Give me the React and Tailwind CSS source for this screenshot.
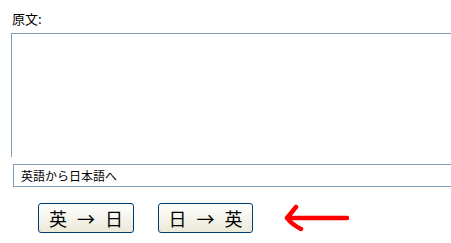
const font = { fontFamily: '"Noto Sans CJK JP", "Liberation Sans", sans-serif' };

const App = () => {
  return (
    <div className="w-[451px] h-[243px] bg-white overflow-hidden text-black" style={font}>
      <div className="pl-[12px] pt-[11px] text-[13px] leading-[16px]">原文:</div>
      <div className="ml-[11px] mt-[6px] h-[124px] border-t border-l border-[#7f9db9] bg-white" />
      <div className="ml-[13px] mt-[7px] h-[23px] border border-r-0 border-[#7f9db9] pl-[7px] flex items-center text-[12px]">
        英語から日本語へ
      </div>
      <div className="flex items-center mt-[16px] ml-[38px]">
        <button className="w-[96px] h-[30px] rounded-[3px] border border-[#003c74] bg-gradient-to-b from-white to-[#ece9d8] text-[18px] leading-none flex items-center justify-center gap-[10px]">
          <span>英</span>
          <span>→</span>
          <span>日</span>
        </button>
        <button className="ml-[24px] w-[95px] h-[30px] rounded-[3px] border border-[#003c74] bg-gradient-to-b from-white to-[#ece9d8] text-[18px] leading-none flex items-center justify-center gap-[10px]">
          <span>日</span>
          <span>→</span>
          <span>英</span>
        </button>
        <svg className="ml-[30px]" width="66" height="28" viewBox="0 0 66 28">
          <path
            d="M64 14 L4 14 M4 14 L13 3 M4 14 C7 18 12 22 18 25"
            fill="none"
            stroke="#ff0000"
            strokeWidth="4.5"
            strokeLinecap="round"
            strokeLinejoin="round"
          />
        </svg>
      </div>
    </div>
  );
};

export default App;
